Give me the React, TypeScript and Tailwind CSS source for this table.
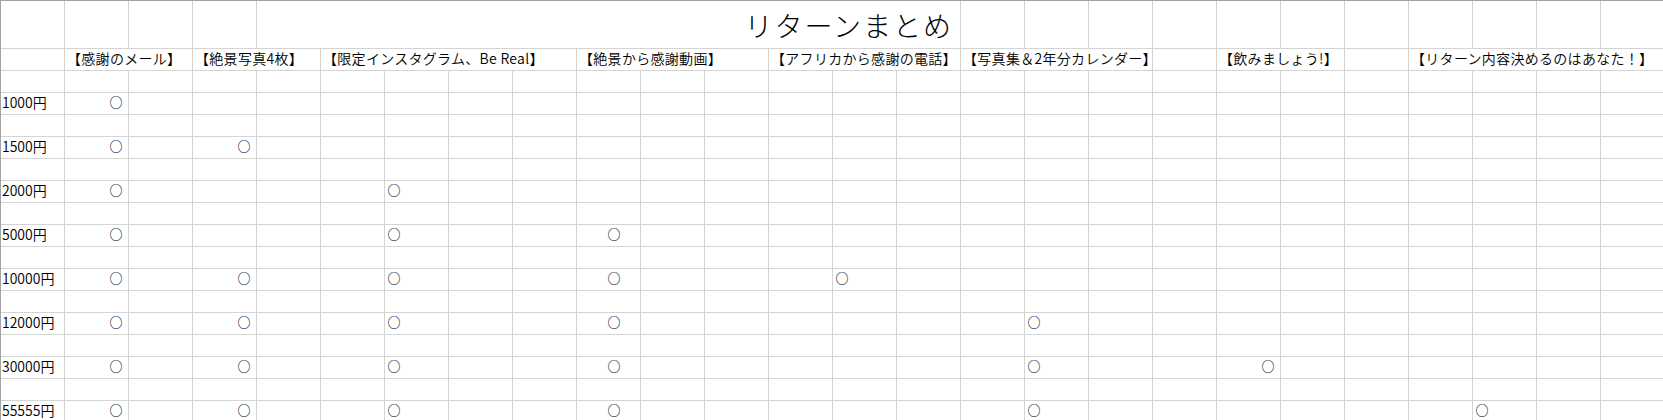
import React from "react";

const cols = Array.from({ length: 26 }, (_, i) => i);

// header cells: span + label
const headers = [
    { span: "col-span-1", label: "" },
    { span: "col-span-2", label: "【感謝のメール】" },
    { span: "col-span-2", label: "【絶景写真4枚】" },
    { span: "col-span-4", label: "【限定インスタグラム、Be Real】" },
    { span: "col-span-3", label: "【絶景から感謝動画】" },
    { span: "col-span-3", label: "【アフリカから感謝の電話】" },
    { span: "col-span-3", label: "【写真集＆2年分カレンダー】" },
    { span: "col-span-1", label: "" },
    { span: "col-span-2", label: "【飲みましょう!】" },
    { span: "col-span-1", label: "" },
    { span: "col-span-4", label: "【リターン内容決めるのはあなた！】" },
];

const B = { col: 1, ml: "ml-[44px]" };
const D = { col: 3, ml: "ml-[44px]" };
const G = { col: 6, ml: "ml-[2px]" };
const J = { col: 9, ml: "ml-[30px]" };
const N = { col: 13, ml: "ml-[2px]" };
const Q = { col: 16, ml: "ml-[2px]" };
const T = { col: 19, ml: "ml-[44px]" };
const X = { col: 23, ml: "ml-[2px]" };

const tiers = [
    { price: "1000円", marks: [B] },
    { price: "1500円", marks: [B, D] },
    { price: "2000円", marks: [B, G] },
    { price: "5000円", marks: [B, G, J] },
    { price: "10000円", marks: [B, D, G, J, N] },
    { price: "12000円", marks: [B, D, G, J, Q] },
    { price: "30000円", marks: [B, D, G, J, Q, T] },
    { price: "55555円", marks: [B, D, G, J, Q, X] },
];

const rowGrid = "grid grid-cols-[repeat(26,64px)]";
const cell = "h-[22px] border-r border-b border-[#d4d4d4]";

const BlankRow = () => (
    <div className={rowGrid}>
        {cols.map((c) => (
            <div key={c} className={cell} />
        ))}
    </div>
);

const TierRow = ({ price, marks }: { price: string; marks: { col: number; ml: string }[] }) => (
    <div className={rowGrid}>
        {cols.map((c) => {
            const mark = marks.find((m) => m.col === c);
            return (
                <div key={c} className={`${cell} flex items-center pb-[4px] overflow-visible whitespace-nowrap`}>
                    {c === 0 && <span className="pl-[1px] text-[14px] font-[350] leading-none text-black">{price}</span>}
                    {mark && (
                        <span className={`${mark.ml} inline-block w-[14px] text-center text-[13px] font-medium leading-none text-black`}>
                            ○
                        </span>
                    )}
                </div>
            );
        })}
    </div>
);

const App = () => {
    return (
        <div className="w-[1663px] h-[420px] overflow-hidden bg-white text-black font-['Noto_Sans_CJK_JP',sans-serif]">
            <div className="border-l border-t border-[#a3a3a3] w-[1665px]">
                {/* title row */}
                <div className={rowGrid}>
                    {cols.slice(0, 4).map((c) => (
                        <div key={c} className="h-[48px] border-r border-b border-[#d4d4d4]" />
                    ))}
                    <div className="col-span-11 h-[48px] border-r border-b border-[#d4d4d4] flex items-center justify-end pr-[7px]">
                        <span className="text-[28px] font-light tracking-[2px] leading-none">リターンまとめ</span>
                    </div>
                    {cols.slice(0, 11).map((c) => (
                        <div key={c} className="h-[48px] border-r border-b border-[#d4d4d4]" />
                    ))}
                </div>

                {/* header row */}
                <div className={rowGrid}>
                    {headers.map((h, i) => (
                        <div key={i} className={`${h.span} ${cell} flex items-center pl-[2px] pb-[4px] whitespace-nowrap`}>
                            <span className="text-[14px] font-[350] tracking-[0.3px] leading-none text-black">{h.label}</span>
                        </div>
                    ))}
                </div>

                {tiers.map((t) => (
                    <React.Fragment key={t.price}>
                        <BlankRow />
                        <TierRow price={t.price} marks={t.marks} />
                    </React.Fragment>
                ))}
            </div>
        </div>
    );
};

export default App;
